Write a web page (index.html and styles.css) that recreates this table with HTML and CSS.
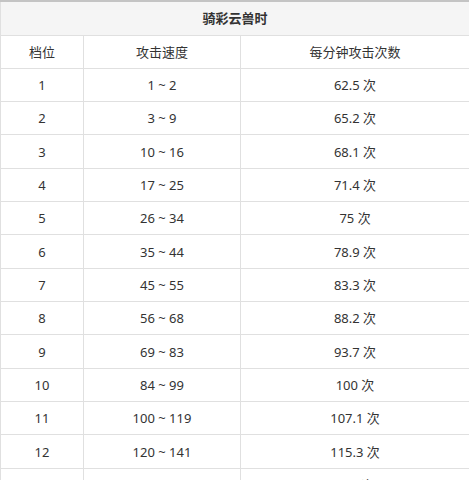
FILE: index.html
```html
<!DOCTYPE html>
<html>
<head>
<meta charset="utf-8">
<link rel="stylesheet" href="styles.css">
</head>
<body>
<table class="speed-table">
  <colgroup>
    <col class="c1"><col class="c2"><col class="c3">
  </colgroup>
  <thead>
    <tr class="title-row"><th colspan="3">骑彩云兽时</th></tr>
    <tr class="head-row"><td>档位</td><td>攻击速度</td><td>每分钟攻击次数</td></tr>
  </thead>
  <tbody>
    <tr><td>1</td><td>1 ~ 2</td><td>62.5 次</td></tr>
    <tr><td>2</td><td>3 ~ 9</td><td>65.2 次</td></tr>
    <tr><td>3</td><td>10 ~ 16</td><td>68.1 次</td></tr>
    <tr><td>4</td><td>17 ~ 25</td><td>71.4 次</td></tr>
    <tr><td>5</td><td>26 ~ 34</td><td>75 次</td></tr>
    <tr><td>6</td><td>35 ~ 44</td><td>78.9 次</td></tr>
    <tr><td>7</td><td>45 ~ 55</td><td>83.3 次</td></tr>
    <tr><td>8</td><td>56 ~ 68</td><td>88.2 次</td></tr>
    <tr><td>9</td><td>69 ~ 83</td><td>93.7 次</td></tr>
    <tr><td>10</td><td>84 ~ 99</td><td>100 次</td></tr>
    <tr><td>11</td><td>100 ~ 119</td><td>107.1 次</td></tr>
    <tr><td>12</td><td>120 ~ 141</td><td>115.3 次</td></tr>
    <tr><td>13</td><td>142 ~ 169</td><td>125 次</td></tr>
  </tbody>
</table>
</body>
</html>
```
FILE: styles.css
```css
html, body {
  margin: 0;
  padding: 0;
  background: #ffffff;
}
body {
  font-family: "Noto Sans", "Noto Sans CJK SC", sans-serif;
  font-size: 13px;
  color: #333333;
}
.speed-table {
  width: 469px;
  border-collapse: collapse;
  table-layout: fixed;
}
.c1 { width: 83px; }
.c2 { width: 157px; }
.c3 { width: 229px; }
.speed-table tr {
  height: 33.33px;
}
.speed-table .title-row {
  height: 34px;
}
.speed-table td,
.speed-table th {
  border: 1px solid #e0e0e0;
  text-align: center;
  padding: 0;
  font-weight: normal;
  line-height: 18px;
}
.speed-table .title-row th {
  background: #f5f5f5;
  font-weight: bold;
  color: #333333;
  border-top: 2px solid #c4c4c4;
}
```
